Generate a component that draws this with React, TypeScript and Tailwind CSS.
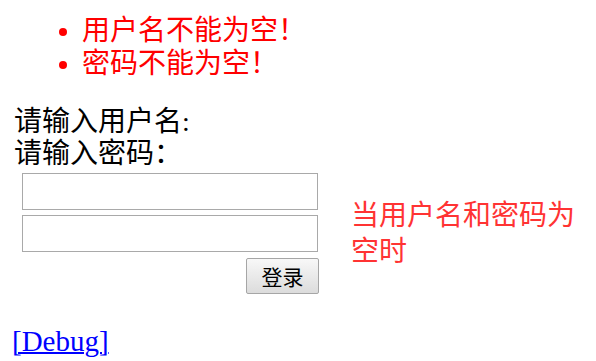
import React from 'react'

const App = () => {
  return (
    <div className="min-h-[361px] bg-white font-['Liberation_Serif','Noto_Sans_CJK_SC',serif] text-[28px] text-black">
      <ul className="list-disc pl-[82px] pt-[14px] leading-[33px] text-[#ff0000]">
        <li>用户名不能为空！</li>
        <li>密码不能为空！</li>
      </ul>

      <div className="mt-[26px] pl-[14px] leading-[32px]">
        <div>请输入用户名:</div>
        <div>请输入密码：</div>
      </div>

      <div className="mt-[3px] flex items-center pl-[22px]">
        <div className="flex w-[297px] flex-col gap-[5px]">
          <input
            type="text"
            className="h-[37px] w-[296px] border border-[#a9a9a9] bg-white px-1 outline-none"
          />
          <input
            type="password"
            className="h-[37px] w-[296px] border border-[#a9a9a9] bg-white px-1 outline-none"
          />
          <button
            type="button"
            className="mt-[1px] flex h-[36px] w-[73px] items-center justify-center self-end rounded-[2px] border border-[#a6a6a6] bg-gradient-to-b from-[#f8f8f8] to-[#dcdcdc] font-['Noto_Sans_CJK_SC',sans-serif] text-[21px] leading-none text-black"
          >
            登录
          </button>
        </div>
        <p className="ml-[32px] w-[240px] leading-[36px] text-[#ff3333]">
          当用户名和密码为空时
        </p>
      </div>

      <div className="mt-[31px] pl-[12px] text-[29px] leading-[32px]">
        <a href="#" className="text-[#0000ff] underline decoration-[2px]">
          [Debug]
        </a>
      </div>
    </div>
  )
}

export default App
